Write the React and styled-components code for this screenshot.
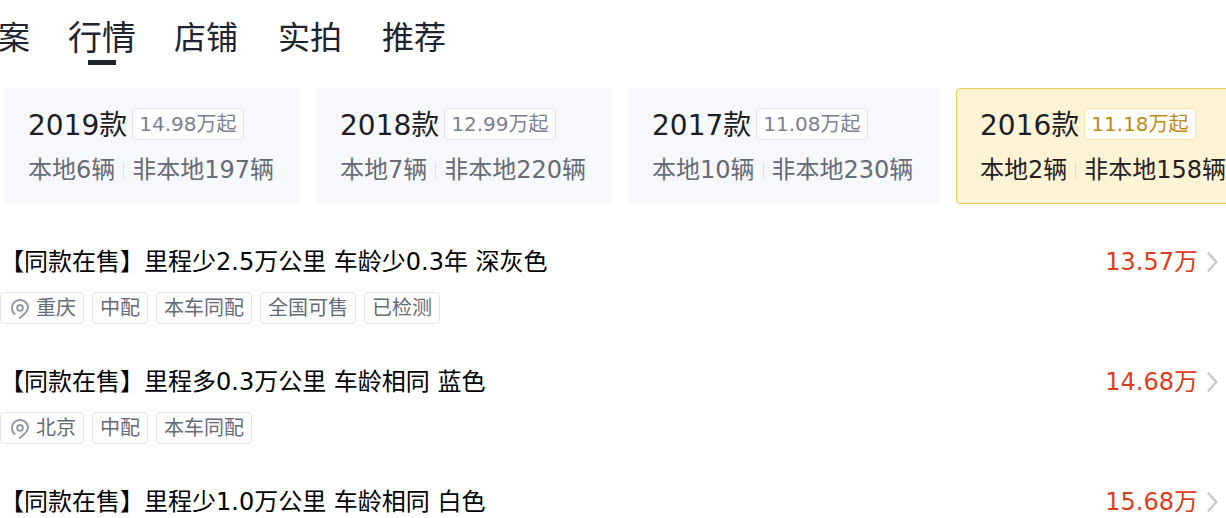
import React from 'react';
import styled, { createGlobalStyle } from 'styled-components';

const GlobalStyle = createGlobalStyle`
  * { box-sizing: border-box; }
  body {
    margin: 0;
    background: #fff;
    overflow: hidden;
    font-family: "DejaVu Sans", "Noto Sans CJK SC", sans-serif;
  }
  button { font: inherit; border: 0; cursor: pointer; }
`;

const Page = styled.main`
  width: 100%;
  height: 100vh;
  overflow: hidden;
`;

const Tabs = styled.nav`
  display: flex;
  align-items: stretch;
  gap: 38px;
  height: 68px;
  margin-left: -2px;
`;

const Tab = styled.button`
  display: flex;
  flex-direction: column;
  align-items: center;
  flex: none;
  padding: 16px 0 0;
  background: none;
  color: #20242e;
  white-space: nowrap;
  font-size: ${(p) => (p.$active ? 34 : 32)}px;
  line-height: 44px;

  & + & + & {
    margin-right: 2px;
  }

  &::after {
    content: '';
    width: 28px;
    height: 5px;
    background: ${(p) => (p.$active ? '#20242e' : 'transparent')};
  }
`;

const Years = styled.section`
  display: flex;
  gap: 16px;
  padding: 20px 0 0 4px;
`;

const YearCard = styled.button`
  flex: none;
  width: ${(p) => (p.$wide ? 312 : 296)}px;
  height: 116px;
  padding: 18px 23px;
  text-align: left;
  white-space: nowrap;
  border: 1px solid ${(p) => (p.$active ? '#e8d05c' : '#f7f8fc')};
  border-radius: 4px;
  background: ${(p) => (p.$active ? '#fef3d5' : '#f7f8fc')};
  color: ${(p) => (p.$active ? '#23211d' : '#666b75')};
`;

const YearHead = styled.div`
  display: flex;
  align-items: center;
  gap: 5px;
  height: 34px;
`;

const YearName = styled.span`
  font-size: 28px;
  line-height: 34px;
  padding-top: 4px;
  color: #1c1e24;
`;

const StartPrice = styled.span`
  height: 32px;
  padding: 0 6px;
  border: 1px solid ${(p) => (p.$active ? '#f3e4a4' : '#e2e4ea')};
  border-radius: 4px;
  background: #fff;
  color: ${(p) => (p.$active ? '#c08a10' : '#7c8090')};
  font-size: 20px;
  line-height: 30px;
`;

const Stats = styled.div`
  display: flex;
  align-items: center;
  gap: 8px;
  margin-top: 13px;
  font-size: 24px;
  line-height: 32px;
`;

const Divider = styled.i`
  width: 1px;
  height: 16px;
  background: ${(p) => (p.$active ? '#e3d9bd' : '#dcdfe5')};
`;

const List = styled.ul`
  margin: 38px 0 0;
  padding: 0;
  list-style: none;
`;

const Item = styled.li`
  padding-bottom: 38px;
`;

const ItemLink = styled.a`
  display: flex;
  align-items: center;
  padding-right: 8px;
  color: #000;
  text-decoration: none;
  font-size: 24px;
  line-height: 40px;
  white-space: nowrap;
`;

const Price = styled.span`
  margin-left: auto;
  margin-right: 8px;
  color: #dc3c20;
`;

const Tags = styled.div`
  display: flex;
  gap: 8px;
  margin-top: 10px;
`;

const Tag = styled.span`
  display: flex;
  align-items: center;
  gap: 6px;
  height: 32px;
  padding: 0 7px;
  border: 1px solid #e2e4ea;
  border-radius: 4px;
  color: #666b7a;
  font-size: 20px;
  line-height: 30px;
  white-space: nowrap;
`;

const PinIcon = () => (
  <svg width="22" height="24" viewBox="0 0 22 24" fill="none" stroke="#959aa8" strokeWidth="2" aria-hidden="true">
    <path d="M7.2 18.4A8 8 0 1 1 20 12C20 15.8 15.8 18.6 11.2 22.4" />
    <circle cx="12" cy="11.8" r="2.9" />
  </svg>
);

const Chevron = () => (
  <svg width="12" height="24" viewBox="0 0 12 24" fill="none" stroke="#c3c6ce" strokeWidth="2.2" aria-hidden="true">
    <path d="M1.8 2.5L10.3 12L1.8 21.5" />
  </svg>
);

const tabs = ['案', '行情', '店铺', '实拍', '推荐'];

const years = [
  { name: '2019款', price: '14.98万起', local: '本地6辆', other: '非本地197辆' },
  { name: '2018款', price: '12.99万起', local: '本地7辆', other: '非本地220辆' },
  { name: '2017款', price: '11.08万起', local: '本地10辆', other: '非本地230辆', wide: true },
  { name: '2016款', price: '11.18万起', local: '本地2辆', other: '非本地158辆', active: true },
];

const cars = [
  {
    title: '【同款在售】里程少2.5万公里 车龄少0.3年 深灰色',
    price: '13.57万',
    city: '重庆',
    tags: ['中配', '本车同配', '全国可售', '已检测'],
  },
  { title: '【同款在售】里程多0.3万公里 车龄相同 蓝色', price: '14.68万', city: '北京', tags: ['中配', '本车同配'] },
  { title: '【同款在售】里程少1.0万公里 车龄相同 白色', price: '15.68万', tags: [] },
];

export default function App() {
  return (
    <Page lang="zh-CN">
      <GlobalStyle />
      <Tabs>
        {tabs.map((t) => (
          <Tab key={t} type="button" $active={t === '行情'}>{t}</Tab>
        ))}
      </Tabs>
      <Years>
        {years.map((y) => (
          <YearCard key={y.name} type="button" $wide={y.wide} $active={y.active}>
            <YearHead>
              <YearName>{y.name}</YearName>
              <StartPrice $active={y.active}>{y.price}</StartPrice>
            </YearHead>
            <Stats>
              <span>{y.local}</span>
              <Divider $active={y.active} />
              <span>{y.other}</span>
            </Stats>
          </YearCard>
        ))}
      </Years>
      <List>
        {cars.map((c) => (
          <Item key={c.title}>
            <ItemLink href="#">
              <span>{c.title}</span>
              <Price>{c.price}</Price>
              <Chevron />
            </ItemLink>
            {c.city && (
              <Tags>
                <Tag><PinIcon />{c.city}</Tag>
                {c.tags.map((t) => <Tag key={t}>{t}</Tag>)}
              </Tags>
            )}
          </Item>
        ))}
      </List>
    </Page>
  );
}
